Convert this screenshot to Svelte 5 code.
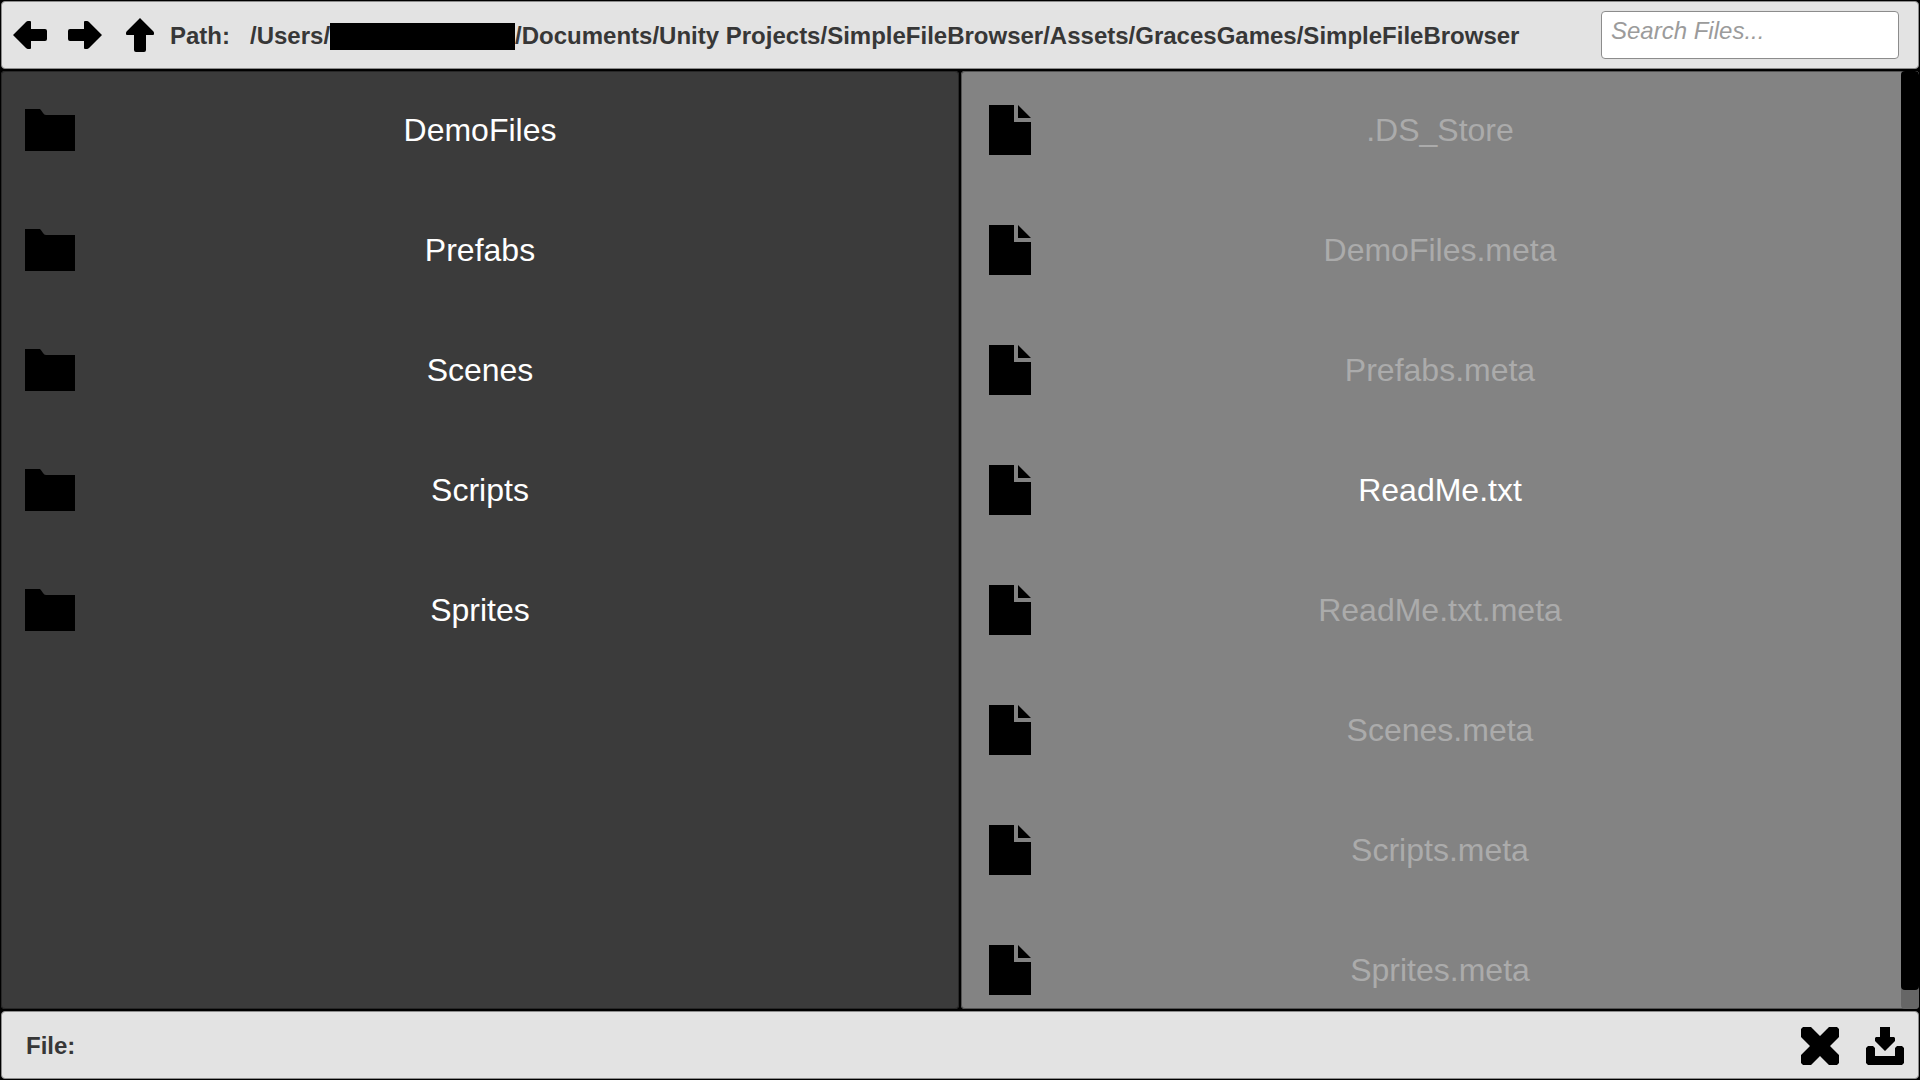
<script>
  const folders = ['DemoFiles', 'Prefabs', 'Scenes', 'Scripts', 'Sprites'];
  const files = [
    '.DS_Store',
    'DemoFiles.meta',
    'Prefabs.meta',
    'ReadMe.txt',
    'ReadMe.txt.meta',
    'Scenes.meta',
    'Scripts.meta',
    'Sprites.meta'
  ];
  const isSelectable = (name) => name.endsWith('.txt');
  let search = $state('');
</script>

<div class="browser">
  <header class="bar top">
    <nav class="nav" aria-label="Navigation">
      <button type="button" aria-label="Back">
        <svg width="34" height="28" viewBox="0 0 34 28"><path d="M0 14 13 1Q14 0 15 0H17Q18 0 18 1V8H32Q34 8 34 10V18Q34 20 32 20H18V27Q18 28 17 28H15Q14 28 13 27Z" /></svg>
      </button>
      <button type="button" aria-label="Forward">
        <svg width="34" height="28" viewBox="0 0 34 28"><path d="M34 14 21 1Q20 0 19 0H17Q16 0 16 1V8H2Q0 8 0 10V18Q0 20 2 20H16V27Q16 28 17 28H19Q20 28 21 27Z" /></svg>
      </button>
      <button type="button" aria-label="Up">
        <svg width="28" height="34" viewBox="0 0 28 34"><path d="M14 0 27 13Q28 14 28 15V16Q28 17 27 17H20V32Q20 34 18 34H10Q8 34 8 32V17H1Q0 17 0 16V15Q0 14 1 13Z" /></svg>
      </button>
    </nav>
    <span class="label">Path:</span>
    <span class="path">/Users/<span class="redacted"></span>/Documents/Unity Projects/SimpleFileBrowser/Assets/GracesGames/SimpleFileBrowser</span>
    <input class="search" type="text" aria-label="Search files" placeholder="Search Files..." bind:value={search} />
  </header>

  <main class="panels">
    <section class="panel folders" aria-label="Folders">
      <div class="list">
        {#each folders as name}
          <button type="button" class="row">
            <svg width="50" height="42" viewBox="0 0 50 42"><path d="M0 0H15Q16 1 18 4Q19 6 21 6H50V42H0Z" /></svg>
            <span>{name}</span>
          </button>
        {/each}
      </div>
    </section>
    <section class="panel files" aria-label="Files">
      <div class="list">
        {#each files as name}
          <button type="button" class="row" disabled={!isSelectable(name)}>
            <svg width="42" height="50" viewBox="0 0 42 50"><path d="M0 0H25V17H42V50H0ZM29 0 42 13H29Z" /></svg>
            <span>{name}</span>
          </button>
        {/each}
      </div>
      <div class="scrollbar"><div class="thumb"></div></div>
    </section>
  </main>

  <footer class="bar bottom">
    <span class="label">File:</span>
    <div class="actions">
      <button type="button" aria-label="Cancel">
        <svg width="38" height="38" viewBox="0 0 38 38"><path d="M2 0H10L19 9 28 0H36L38 2V10L29 19 38 28V36L36 38H28L19 29 10 38H2L0 36V28L9 19 0 10V2Z" /></svg>
      </button>
      <button type="button" aria-label="Save">
        <svg width="38" height="38" viewBox="0 0 38 38"><path d="M14 0H24V10H28L29 11V14L19 24 9 14V11L10 10H14ZM2 19H7L9 21V29H29V21L31 19H36L38 21V36L36 38H2L0 36V21Z" /></svg>
      </button>
    </div>
  </footer>
</div>

<style>
  :global(body) {
    margin: 0;
    background: #000;
  }

  .browser {
    box-sizing: border-box;
    height: 100vh;
    padding: 1px;
    display: flex;
    flex-direction: column;
    gap: 2px;
    background: #000;
    color: #373737;
    font-family: 'Liberation Sans', Arial, sans-serif;
  }

  button {
    display: flex;
    margin: 0;
    padding: 0;
    border: 0;
    background: none;
    color: inherit;
    font: inherit;
    cursor: pointer;
  }

  svg {
    display: block;
    flex: none;
    fill: #000;
  }

  .bar {
    box-sizing: border-box;
    flex: none;
    height: 68px;
    display: flex;
    align-items: center;
    border: 1px solid #8c8c8c;
    border-radius: 4px;
    background: #e3e3e3;
    font-size: 24px;
    line-height: 28px;
    font-weight: bold;
    white-space: nowrap;
  }

  .top {
    padding: 0 19px 0 11px;
  }

  .bottom {
    padding: 0 14px 0 24px;
    justify-content: space-between;
  }

  .nav {
    display: flex;
    align-items: center;
    gap: 21px;
    margin-right: 13px;
  }

  .nav button {
    width: 34px;
    justify-content: center;
  }

  .label,
  .path,
  .actions {
    padding-top: 2px;
  }

  .path {
    display: flex;
    align-items: center;
    margin-left: 20px;
  }

  .redacted {
    width: 185px;
    height: 27px;
    background: #000;
  }

  .search {
    box-sizing: border-box;
    width: 298px;
    height: 48px;
    margin-left: auto;
    padding: 0 9px 8px;
    border: 1px solid #8c8c8c;
    border-radius: 4px;
    outline: 0;
    background: #fff;
    color: #373737;
    font-family: inherit;
    font-size: 24px;
  }

  .search::placeholder {
    color: #9b9b9b;
    font-style: italic;
    opacity: 1;
  }

  .panels {
    flex: 1;
    min-height: 0;
    display: grid;
    grid-template-columns: 1fr 1fr;
    gap: 2px;
  }

  .panel {
    display: grid;
    overflow: hidden;
    border-radius: 4px;
  }

  .folders {
    box-shadow: inset 0 0 0 1px #272727;
    background: #3b3b3b;
  }

  .files {
    box-shadow: inset 0 0 0 1px #525252;
    background: #838383;
  }

  .list,
  .scrollbar {
    grid-area: 1 / 1;
    min-height: 0;
  }

  .row {
    box-sizing: border-box;
    width: 100%;
    height: 120px;
    padding: 0 24px 2px;
    display: grid;
    grid-template-columns: 50px 1fr 50px;
    align-items: center;
    color: #fff;
    font-size: 32px;
    line-height: 36px;
    text-align: center;
  }

  .files .row {
    padding: 0 28px 2px;
  }

  .row:disabled {
    color: #ababab;
    cursor: default;
  }

  .scrollbar {
    justify-self: end;
    width: 18px;
    background: #666;
    border-radius: 4px;
  }

  .thumb {
    height: 98%;
    border-radius: 4px;
    background: #000;
  }

  .actions {
    display: flex;
    gap: 27px;
  }
</style>
